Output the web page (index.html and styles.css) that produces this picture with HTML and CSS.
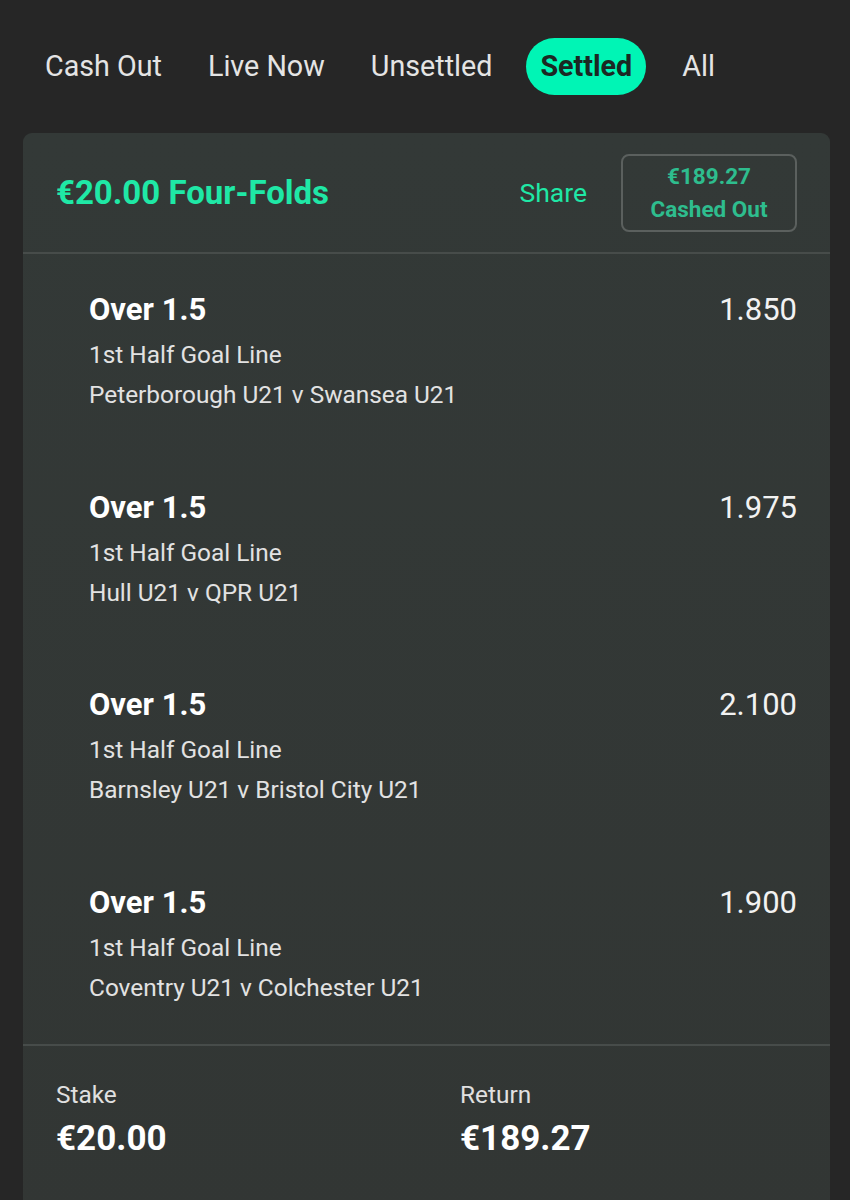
FILE: index.html
```html
<!DOCTYPE html>
<html>
<head>
<meta charset="utf-8">
<link rel="stylesheet" href="styles.css">
</head>
<body>
<nav class="tabs">
  <span class="tab">Cash Out</span>
  <span class="tab">Live Now</span>
  <span class="tab">Unsettled</span>
  <span class="tab active">Settled</span>
  <span class="tab">All</span>
</nav>
<section class="card">
  <header class="card-head">
    <h1 class="bet-title">€20.00 Four-Folds</h1>
    <span class="share">Share</span>
    <div class="cashed">
      <span>€189.27</span>
      <span>Cashed Out</span>
    </div>
  </header>
  <div class="selections">
    <div class="sel">
      <div class="sel-info">
        <div class="sel-name">Over 1.5</div>
        <div class="sel-line">1st Half Goal Line</div>
        <div class="sel-line">Peterborough U21 v Swansea U21</div>
      </div>
      <div class="odds">1.850</div>
    </div>
    <div class="sel">
      <div class="sel-info">
        <div class="sel-name">Over 1.5</div>
        <div class="sel-line">1st Half Goal Line</div>
        <div class="sel-line">Hull U21 v QPR U21</div>
      </div>
      <div class="odds">1.975</div>
    </div>
    <div class="sel">
      <div class="sel-info">
        <div class="sel-name">Over 1.5</div>
        <div class="sel-line">1st Half Goal Line</div>
        <div class="sel-line">Barnsley U21 v Bristol City U21</div>
      </div>
      <div class="odds">2.100</div>
    </div>
    <div class="sel">
      <div class="sel-info">
        <div class="sel-name">Over 1.5</div>
        <div class="sel-line">1st Half Goal Line</div>
        <div class="sel-line">Coventry U21 v Colchester U21</div>
      </div>
      <div class="odds">1.900</div>
    </div>
  </div>
  <footer class="totals">
    <div class="total">
      <div class="total-label">Stake</div>
      <div class="total-value">€20.00</div>
    </div>
    <div class="total">
      <div class="total-label">Return</div>
      <div class="total-value">€189.27</div>
    </div>
  </footer>
</section>
</body>
</html>
```

FILE: styles.css
```css
html, body {
  margin: 0;
  padding: 0;
  background: #262626;
  font-family: Roboto, "Liberation Sans", sans-serif;
  color: #ffffff;
  height: 1200px;
  overflow: hidden;
}

.tabs {
  display: flex;
  align-items: center;
  height: 133px;
  padding-left: 45px;
  box-sizing: border-box;
}

.tab {
  font-size: 28.7px;
  color: #e4e4e4;
  line-height: 57px;
  margin-right: 46px;
}

.tab.active {
  background: #00f5b5;
  color: #1b2823;
  font-weight: 700;
  border-radius: 29px;
  padding: 0 14px;
  margin-left: -12px;
  margin-right: 36px;
}

.card {
  margin: 0 20px 0 23px;
  background: linear-gradient(180deg, #333937 0%, #323634 100%);
  border-radius: 9px 9px 0 0;
  min-height: 1100px;
}

.card-head {
  display: flex;
  align-items: center;
  height: 121px;
  padding: 0 33px;
  border-bottom: 2px solid #474c4a;
  box-sizing: border-box;
}

.bet-title {
  margin: 0;
  flex: 1;
  font-size: 33px;
  font-weight: 700;
  color: #1fe8a6;
}

.share {
  font-size: 26.5px;
  color: #1fe8a6;
  margin-right: 34px;
}

.cashed {
  width: 176px;
  height: 78px;
  box-sizing: border-box;
  border: 2px solid #5b605e;
  border-radius: 8px;
  display: flex;
  flex-direction: column;
  align-items: center;
  justify-content: center;
  font-size: 22.5px;
  font-weight: 700;
  color: #2ebd8e;
  line-height: 33px;
}

.sel {
  display: flex;
  justify-content: space-between;
  padding: 31px 33px 36px 66px;
  height: 197.5px;
  box-sizing: border-box;
}

.sel-name {
  font-size: 31px;
  font-weight: 700;
  line-height: 50px;
}

.sel-line {
  font-size: 24.4px;
  line-height: 40px;
  color: #e2e2e2;
}

.odds {
  font-size: 31px;
  line-height: 50px;
  color: #f2f2f2;
}

.totals {
  display: flex;
  border-top: 2px solid #474c4a;
  padding: 34px 33px 0;
}

.total {
  flex: 0 0 404px;
}

.total-label {
  font-size: 24.4px;
  line-height: 30px;
  color: #e0e0e0;
}

.total-value {
  margin-top: 9px;
  font-size: 35px;
  font-weight: 700;
  line-height: 40px;
}
```
